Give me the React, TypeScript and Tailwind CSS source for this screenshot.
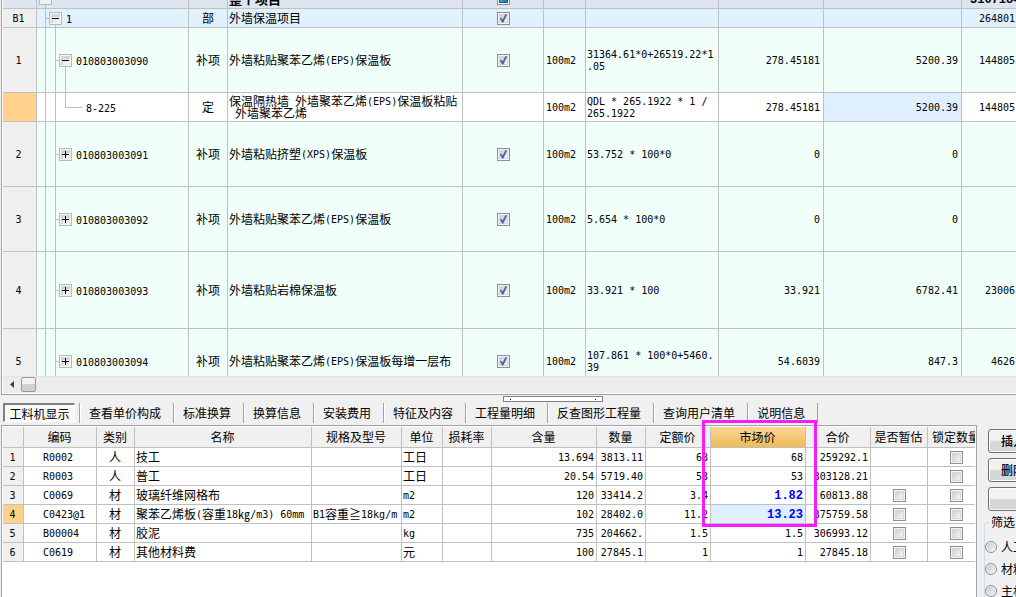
import { useState } from "react";
import type { ReactNode } from "react";
import clsx from "clsx";

interface BudgetRow {
  no: string;
  code: string;
  kind: string;
  name: string;
  checked?: boolean;
  unit: string;
  formula: string;
  quantity: string;
  price: string;
  total: string;
  node: "root" | "part" | "open" | "closed" | "leaf";
  height: string;
  tone: string;
}

interface MaterialRow {
  code: string;
  kind: string;
  name: string;
  spec: string;
  unit: string;
  content: string;
  quantity: string;
  quotaPrice: string;
  marketPrice: string;
  total: string;
  canEstimate: boolean;
  edited?: boolean;
}

const MINT = "bg-[#f0fffa]";

const BUDGET_ROWS: BudgetRow[] = [
  { no: "", code: "", kind: "", name: "整个项目", unit: "", formula: "", quantity: "", price: "", total: "3107184", node: "root", height: "h-[19px]", tone: "bg-[#dde5ef]" },
  { no: "B1", code: "1", kind: "部", name: "外墙保温项目", checked: true, unit: "", formula: "", quantity: "", price: "", total: "264801", node: "part", height: "h-[18px]", tone: "bg-[#e0f2ff]" },
  { no: "1", code: "010803003090", kind: "补项", name: "外墙粘贴聚苯乙烯(EPS)保温板", checked: true, unit: "100m2", formula: "31364.61*0+26519.22*1\n.05", quantity: "278.45181", price: "5200.39", total: "144805", node: "open", height: "h-[64px]", tone: MINT },
  { no: "", code: "8-225", kind: "定", name: "保温隔热墙 外墙聚苯乙烯(EPS)保温板粘贴\n 外墙聚苯乙烯", unit: "100m2", formula: "QDL * 265.1922 * 1 /\n265.1922", quantity: "278.45181", price: "5200.39", total: "144805", node: "leaf", height: "h-[28px]", tone: "bg-white" },
  { no: "2", code: "010803003091", kind: "补项", name: "外墙粘贴挤塑(XPS)保温板", checked: true, unit: "100m2", formula: "53.752 * 100*0", quantity: "0", price: "0", total: "", node: "closed", height: "h-[64px]", tone: MINT },
  { no: "3", code: "010803003092", kind: "补项", name: "外墙粘贴聚苯乙烯(EPS)保温板", checked: true, unit: "100m2", formula: "5.654 * 100*0", quantity: "0", price: "0", total: "", node: "closed", height: "h-[64px]", tone: MINT },
  { no: "4", code: "010803003093", kind: "补项", name: "外墙粘贴岩棉保温板", checked: true, unit: "100m2", formula: "33.921 * 100", quantity: "33.921", price: "6782.41", total: "23006", node: "closed", height: "h-[76px]", tone: MINT },
  { no: "5", code: "010803003094", kind: "补项", name: "外墙粘贴聚苯乙烯(EPS)保温板每增一层布", checked: true, unit: "100m2", formula: "107.861 * 100*0+5460.\n39", quantity: "54.6039", price: "847.3", total: "4626", node: "closed", height: "h-[64px]", tone: MINT },
];

const MATERIAL_ROWS: MaterialRow[] = [
  { code: "R0002", kind: "人", name: "技工", spec: "", unit: "工日", content: "13.694", quantity: "3813.11", quotaPrice: "68", marketPrice: "68", total: "259292.1", canEstimate: false },
  { code: "R0003", kind: "人", name: "普工", spec: "", unit: "工日", content: "20.54", quantity: "5719.40", quotaPrice: "53", marketPrice: "53", total: "303128.21", canEstimate: false },
  { code: "C0069", kind: "材", name: "玻璃纤维网格布", spec: "", unit: "m2", content: "120", quantity: "33414.2", quotaPrice: "3.4", marketPrice: "1.82", total: "60813.88", canEstimate: true, edited: true },
  { code: "C0423@1", kind: "材", name: "聚苯乙烯板(容重18㎏/m3) 60mm", spec: "B1容重≧18kg/m", unit: "m2", content: "102", quantity: "28402.0", quotaPrice: "11.2", marketPrice: "13.23", total: "375759.58", canEstimate: true, edited: true },
  { code: "B00004", kind: "材", name: "胶泥", spec: "", unit: "kg", content: "735", quantity: "204662.", quotaPrice: "1.5", marketPrice: "1.5", total: "306993.12", canEstimate: true },
  { code: "C0619", kind: "材", name: "其他材料费", spec: "", unit: "元", content: "100", quantity: "27845.1", quotaPrice: "1", marketPrice: "1", total: "27845.18", canEstimate: true },
];

const MATERIAL_HEADERS = ["", "编码", "类别", "名称", "规格及型号", "单位", "损耗率", "含量", "数量", "定额价", "市场价", "合价", "是否暂估", "锁定数量"];

const TABS = ["工料机显示", "查看单价构成", "标准换算", "换算信息", "安装费用", "特征及内容", "工程量明细", "反查图形工程量", "查询用户清单", "说明信息"];

// Latin runs are set in a smaller monospace so that two of them fill one Han character
function Txt({ children, bold }: { children: string; bold?: boolean }) {
  const runs = children.split(/([\x20-\x7e]+)/).filter(Boolean);
  return (
    <>
      {runs.map((run, i) =>
        /^[\x20-\x7e]/.test(run) ? (
          <span
            key={i}
            className={clsx(
              "align-[1px] leading-[0]",
              bold
                ? "font-['Liberation_Mono',monospace] text-[12px] font-bold"
                : "font-['DejaVu_Sans_Mono',monospace] text-[10px]"
            )}
          >
            {run}
          </span>
        ) : (
          <span key={i}>{run}</span>
        )
      )}
    </>
  );
}

function Check({ label, initial = false }: { label: string; initial?: boolean }) {
  const [on, setOn] = useState(initial);
  return (
    <span className="relative mx-auto block size-[13px]">
      <input
        type="checkbox"
        aria-label={label}
        checked={on}
        onChange={() => setOn(!on)}
        className="block size-[13px] appearance-none border border-[#8e8f8f] bg-[#f4f4f4]"
      />
      <svg viewBox="0 0 13 13" className="pointer-events-none absolute inset-0 size-[13px]">
        <defs>
          <linearGradient id="well" x1="0" y1="0" x2="1" y2="1">
            <stop offset="0" stopColor="#c9cdd3" />
            <stop offset="1" stopColor="#f8f8f8" />
          </linearGradient>
        </defs>
        <rect x="2.5" y="2.5" width="8" height="8" fill="url(#well)" stroke="#d4d7da" />
        {on && <path d="M3 6.2 L4.6 6.2 L5.6 8 L8.4 2.6 L9.9 2.6 L6.3 10.2 L5.1 10.2 Z" fill="#4a5fa3" stroke="#4a5fa3" strokeWidth="0.4" />}
      </svg>
    </span>
  );
}

function ToggleBox({ open, label }: { open: boolean; label: string }) {
  return (
    <button type="button" aria-label={label} className="block size-[13px] shrink-0 border border-[#b9b9b9] bg-[#f4f4f4]">
      <svg viewBox="0 0 11 11" className="block size-[11px]" shapeRendering="crispEdges">
        <rect x="1" y="1" width="9" height="9" fill="#d3d6dd" />
        <rect x="3" y="4" width="7" height="6" fill="#eeeeef" />
        <rect x="2" y="5" width="7" height="1" fill="#000" />
        {!open && <rect x="5" y="2" width="1" height="7" fill="#000" />}
      </svg>
    </button>
  );
}

function Branch({ children, tail }: { children: ReactNode; tail?: boolean }) {
  return (
    <span className="flex h-full w-[13px] shrink-0 flex-col items-center">
      <span className="flex-1" />
      {children}
      <span className={clsx("w-px flex-1", tail && "bg-[#c0c0c0]")} />
    </span>
  );
}

function TreeCell({ row }: { row: BudgetRow }) {
  const guide = "h-full shrink-0 border-r border-[#c0c0c0]";
  const stub = "h-px w-[3px] shrink-0 bg-[#c0c0c0]";
  return (
    <div className={clsx("flex items-center", row.height)}>
      {row.node === "root" && (
        <div className="h-full pl-[2px]">
          <Branch tail>
            <span className="block size-[13px] shrink-0 border border-[#b9b9b9] bg-[#eef0f3]" />
          </Branch>
        </div>
      )}
      {row.node !== "root" && <span className={clsx(guide, "w-[9px]")} />}
      {row.node === "part" && (
        <>
          <span className={stub} />
          <Branch tail>
            <ToggleBox open label="折叠" />
          </Branch>
        </>
      )}
      {(row.node === "open" || row.node === "closed") && (
        <>
          <span className={clsx(guide, "w-[10px]")} />
          <span className={stub} />
          <Branch tail={row.node === "open"}>
            <ToggleBox open={row.node === "open"} label={row.node === "open" ? "折叠" : "展开"} />
          </Branch>
        </>
      )}
      {row.node === "leaf" && (
        <>
          <span className={clsx(guide, "w-[10px]")} />
          <span className="ml-[9px] h-[15px] w-[17px] shrink-0 self-start border-b border-l border-[#c0c0c0]" />
        </>
      )}
      <span className="pt-px pl-[4px]">
        <Txt>{row.code}</Txt>
      </span>
    </div>
  );
}

function BudgetGrid() {
  const cell = "overflow-hidden border-r border-b border-[#c0c0c0] p-0";
  return (
    <div className="h-[376px] overflow-hidden">
      <table className="-mt-[11px] w-full table-fixed border-separate border-spacing-0 whitespace-pre">
        <colgroup>
          <col className="w-[34px]" />
          <col className="w-[152px]" />
          <col className="w-[39px]" />
          <col className="w-[235px]" />
          <col className="w-[81px]" />
          <col className="w-[42px]" />
          <col className="w-[133px]" />
          <col className="w-[105px]" />
          <col className="w-[138px]" />
          <col />
        </colgroup>
        <tbody>
          {BUDGET_ROWS.map((row, i) => {
            const root = row.node === "root";
            return (
              <tr key={i} className={row.tone}>
                <th scope="row" className={clsx(cell, "pr-[2px] font-normal", row.node === "leaf" ? "bg-[#ffd18a]" : root ? "" : "bg-[#efefef]")}>
                  <Txt>{row.no}</Txt>
                </th>
                <td className={cell}>
                  <TreeCell row={row} />
                </td>
                <td className={clsx(cell, "text-center")}>{row.kind}</td>
                <td className={clsx(cell, "pl-px", root && "text-[13px] font-bold")}>
                  <Txt>{row.name}</Txt>
                </td>
                <td className={cell}>
                  {row.checked && <Check label={`选择 ${row.name}`} initial />}
                  {root && (
                    <span className="mx-auto block size-[13px] border border-[#8e8f8f] bg-white p-px">
                      <span className="block size-[9px] border border-[#1c5f80] bg-linear-to-br from-[#5fc3e8] to-[#1177a5]" />
                    </span>
                  )}
                </td>
                <td className={clsx(cell, "pl-[2px]")}>
                  <Txt>{row.unit}</Txt>
                </td>
                <td className={clsx(cell, "pl-px")}>
                  <Txt>{row.formula}</Txt>
                </td>
                <td className={clsx(cell, "pr-[3px] text-right")}>
                  <Txt>{row.quantity}</Txt>
                </td>
                <td className={clsx(cell, "pr-[3px] text-right", row.node === "leaf" && "bg-[#e0efff]")}>
                  <Txt>{row.price}</Txt>
                </td>
                <td className={clsx("overflow-hidden border-b border-[#c0c0c0] p-0", root ? "pl-[8px]" : "pr-px text-right")}>
                  <Txt bold={root}>{row.total}</Txt>
                </td>
              </tr>
            );
          })}
        </tbody>
      </table>
    </div>
  );
}

function ScrollBar() {
  return (
    <div className="flex h-[17px] border-t border-[#e4e4e4] bg-[#ececec]">
      <button type="button" aria-label="向左滚动" className="flex h-[15px] w-[18px] items-center justify-center">
        <svg viewBox="0 0 4 7" className="h-[7px] w-[4px]">
          <path d="M4 0 L0 3.5 L4 7 Z" fill="#404040" />
        </svg>
      </button>
      <button
        type="button"
        aria-label="滚动滑块"
        className="h-[15px] w-[15px] rounded-[2px] border border-[#979797] bg-linear-to-b from-[#f4f4f4] from-50% to-[#d2d2d2] to-50%"
      />
    </div>
  );
}

function TabStrip() {
  const [active, setActive] = useState(0);
  return (
    <div role="tablist" className="flex h-[20px] overflow-hidden pl-[3px]">
      {TABS.map((tab, i) => (
        <div key={tab} className="flex shrink-0 border-r border-[#a0a0a0]">
          <button
            type="button"
            role="tab"
            aria-selected={active === i}
            onClick={() => setActive(i)}
            className={clsx(
              "h-[19px] leading-[18px]",
              i === 0 ? "mr-[4px] w-[72px]" : "border-l border-white pr-[12px] pl-[8px]",
              active === i && "border-t-2 border-r border-b border-l-2 border-t-[#808080] border-r-white border-b-white border-l-[#808080] bg-[#f8f8f8]"
            )}
          >
            {tab}
          </button>
        </div>
      ))}
    </div>
  );
}

function MaterialGrid() {
  const cell = "h-[19px] overflow-hidden border-r border-b border-[#c0c0c0] p-0";
  return (
    <table className="w-[983px] table-fixed border-separate border-spacing-0 whitespace-pre">
      <colgroup>
        <col className="w-[21px]" />
        <col className="w-[73px]" />
        <col className="w-[38px]" />
        <col className="w-[177px]" />
        <col className="w-[90px]" />
        <col className="w-[41px]" />
        <col className="w-[49px]" />
        <col className="w-[105px]" />
        <col className="w-[49px]" />
        <col className="w-[65px]" />
        <col className="w-[95px]" />
        <col className="w-[65px]" />
        <col className="w-[57px]" />
        <col className="w-[58px]" />
      </colgroup>
      <thead>
        <tr className="bg-[#f0f0f0]">
          {MATERIAL_HEADERS.map((title, i) => (
            <th
              key={i}
              scope="col"
              className={clsx(
                "h-[21px] overflow-hidden border-r border-b border-[#c0c0c0] p-0 pr-px font-normal",
                title === "市场价" && "bg-linear-to-b from-[#fad596] to-[#eebb58]"
              )}
            >
              {title}
            </th>
          ))}
        </tr>
      </thead>
      <tbody>
        {MATERIAL_ROWS.map((row, i) => (
          <tr key={row.code}>
            <th scope="row" className={clsx(cell, "pr-px font-normal", i === 3 ? "bg-[#ffd18a]" : "bg-[#f0f0f0]")}>
              <Txt>{String(i + 1)}</Txt>
            </th>
            <td className={clsx(cell, "pl-[19px]")}>
              <Txt>{row.code}</Txt>
            </td>
            <td className={clsx(cell, "pr-px text-center")}>{row.kind}</td>
            <td className={clsx(cell, "pl-px")}>
              <Txt>{row.name}</Txt>
            </td>
            <td className={clsx(cell, "pl-px")}>
              <Txt>{row.spec}</Txt>
            </td>
            <td className={clsx(cell, "pl-px")}>
              <Txt>{row.unit}</Txt>
            </td>
            <td className={cell} />
            <td className={clsx(cell, "pr-[2px] text-right")}>
              <Txt>{row.content}</Txt>
            </td>
            <td className={clsx(cell, "pr-[2px] text-right")}>
              <Txt>{row.quantity}</Txt>
            </td>
            <td className={clsx(cell, "pr-[2px] text-right")}>
              <Txt>{row.quotaPrice}</Txt>
            </td>
            <td className={clsx(cell, "pr-[2px] text-right", row.edited && "text-[#0000ff]", i === 3 && "bg-[#e0f0ff]")}>
              <Txt bold={row.edited}>{row.marketPrice}</Txt>
            </td>
            <td className={clsx(cell, "pr-[2px] text-right")}>
              <Txt>{row.total}</Txt>
            </td>
            <td className={cell}>{row.canEstimate && <Check label={`${row.name} 是否暂估`} />}</td>
            <td className={cell}>
              <Check label={`${row.name} 锁定数量`} />
            </td>
          </tr>
        ))}
      </tbody>
    </table>
  );
}

function SidePanel() {
  const button =
    "h-[24px] w-[60px] rounded-[3px] border border-[#707070] bg-linear-to-b from-[#f2f2f2] from-45% to-[#d6d6d6] to-55% pl-[12px] text-left font-medium shadow-[inset_0_0_0_1px_#fafafa]";
  return (
    <aside className="w-[39px] shrink-0 overflow-hidden">
      <div className="flex w-[80px] flex-col gap-[5px] pt-[4px] pl-[11px]">
        <button type="button" className={button}>插入</button>
        <button type="button" className={button}>删除</button>
        <button type="button" aria-label="更多" className={button} />
      </div>
      <fieldset className="mt-[4px] ml-[7px] h-[120px] w-[80px] rounded-[3px] border border-[#cfdde8] p-0">
        <legend className="ml-[5px] px-px leading-[14px]">筛选</legend>
        <div className="flex flex-col gap-[10px] pt-[12px]">
          {["人工", "材料", "主材"].map((name) => (
            <label key={name} className="flex items-center gap-[4px]">
              <input
                type="radio"
                name="filter"
                className="block size-[12px] appearance-none rounded-full border border-[#8e8f8f] bg-linear-to-br from-[#c3c7cc] to-[#f8f8f8] shadow-[inset_0_0_0_1px_#f4f4f4] checked:to-[#3a6ea5]"
              />
              {name}
            </label>
          ))}
        </div>
      </fieldset>
    </aside>
  );
}

export default function App() {
  return (
    <div className="flex h-screen flex-col overflow-hidden bg-[#f0f0f0] font-['Noto_Sans_CJK_SC',sans-serif] text-[12px] leading-[12px] text-black">
      <section className="ml-px border-b border-l border-[#a0a0a8]">
        <div className="border-b border-l border-white">
          <BudgetGrid />
          <ScrollBar />
        </div>
      </section>

      <section className="relative flex min-h-0 flex-1 flex-col">
        <div className="h-[8px] shrink-0 pt-px">
          <div className="ml-[503px] flex h-[6px] w-[100px] items-center justify-between border border-[#808080] bg-white px-[6px]">
            <span className="size-px bg-[#000080]" />
            <span className="size-px bg-[#000080]" />
          </div>
        </div>
        <TabStrip />
        <div className="mt-[2px] flex min-h-0 flex-1">
          <div className="ml-px min-w-0 flex-1 border-t border-r border-l border-[#a0a0a8]">
            <div className="h-full overflow-hidden border-t border-r border-l border-white bg-white">
              <MaterialGrid />
            </div>
          </div>
          <SidePanel />
        </div>

        {/* marker over the market price column */}
        <div className="pointer-events-none absolute top-[25px] left-[702px] h-[107px] w-[115px] border-3 border-[#f81df8]" />
      </section>
    </div>
  );
}
